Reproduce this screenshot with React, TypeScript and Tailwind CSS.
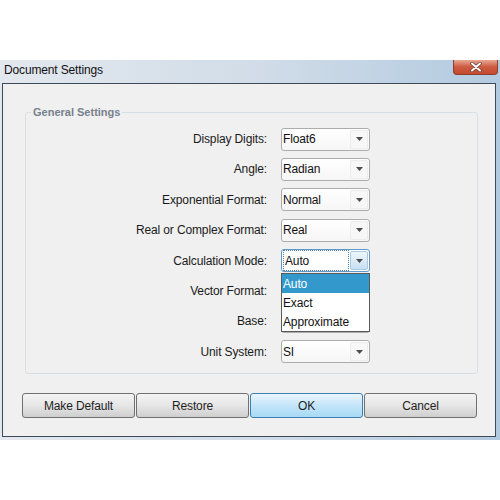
import { useState } from "react";

type Row = { label: string; value: string };

const rows: Row[] = [
  { label: "Display Digits:", value: "Float6" },
  { label: "Angle:", value: "Radian" },
  { label: "Exponential Format:", value: "Normal" },
  { label: "Real or Complex Format:", value: "Real" },
  { label: "Calculation Mode:", value: "Auto" },
  { label: "Vector Format:", value: "" },
  { label: "Base:", value: "" },
  { label: "Unit System:", value: "SI" },
];

const calcOptions = ["Auto", "Exact", "Approximate"];

function Arrow() {
  return (
    <svg width="7" height="4" viewBox="0 0 7 4">
      <path d="M0 0h7L3.5 4z" fill="#4d4d4d" />
    </svg>
  );
}

function Combo({ value, focused, open, onPick }: { value: string; focused?: boolean; open?: boolean; onPick?: (v: string) => void }) {
  return (
    <div className="relative w-[89px] h-[23px]">
      <div
        className={`w-full h-full rounded-[3px] border flex items-center ${
          focused ? "border-[#5d9ac9] bg-white" : "border-[#acacac] bg-gradient-to-b from-[#ffffff] to-[#f6f6f6]"
        }`}
      >
        <div className={`flex-1 h-full flex items-center pl-[1px] ${focused ? "m-[1px] border border-dotted border-[#5580a8]" : ""}`}>
          <span className="text-[12px] text-[#111] tracking-[-0.13px]">{value}</span>
        </div>
        <div
          className={`w-[18px] h-[19px] mr-[1px] rounded-[2px] border flex items-center justify-center ${
            focused ? "border-[#a9c8e2] bg-gradient-to-b from-[#eef6fc] to-[#c7dff2]" : "border-[#ececec] bg-[#f7f7f7]"
          }`}
        >
          <Arrow />
        </div>
      </div>
      {open && (
        <div className="absolute left-0 top-[24px] w-[89px] border border-[#5a5a5a] bg-white z-10">
          {calcOptions.map(o => (
            <div
              key={o}
              onClick={() => onPick && onPick(o)}
              className={`h-[19px] pl-[1px] flex items-center text-[12px] tracking-[-0.13px] ${o === value ? "bg-[#3399cc] text-white" : "text-[#111]"}`}
            >
              {o}
            </div>
          ))}
        </div>
      )}
    </div>
  );
}

function WinButton({ label, primary }: { label: string; primary?: boolean }) {
  return (
    <button
      className={`w-[113px] h-[25px] rounded-[3px] border text-[12px] tracking-[-0.13px] text-[#1e1e1e] ${
        primary
          ? "border-[#3c7fb1] bg-gradient-to-b from-[#eaf6fd] via-[#c4e5f9] to-[#a7d9f5]"
          : "border-[#707070] bg-gradient-to-b from-[#f4f4f4] via-[#e6e6e6] to-[#cfcfcf]"
      }`}
    >
      {label}
    </button>
  );
}

export default function App() {
  const [calc, setCalc] = useState("Auto");

  return (
    <div className="w-[500px] h-[500px] bg-white flex flex-col" style={{ fontFamily: '"Liberation Sans", Arial, sans-serif' }}>
      <div className="h-[60px]" />

      {/* glass window frame */}
      <div className="h-[380px] flex flex-col bg-gradient-to-r from-[#e3e8ee] via-[#d2dde8] to-[#b2cae0]">
        <div className="h-[23px] flex justify-between pl-[4px] pr-[2px]">
          <span className="text-[12px] text-[#111] leading-none pt-[4px] tracking-[-0.15px]">Document Settings</span>
          <div className="w-[45px] h-[15px] rounded-b-[4px] border border-t-0 border-[#8d3f2e] bg-gradient-to-b from-[#e9a894] via-[#cc5a40] to-[#c44a30] flex items-center justify-center">
            <svg width="12" height="10" viewBox="0 0 12 10">
              <path d="M2 1.5l8 7M10 1.5l-8 7" stroke="#6b3b33" strokeWidth="3.4" strokeLinecap="round" />
              <path d="M2 1.5l8 7M10 1.5l-8 7" stroke="#ffffff" strokeWidth="2" strokeLinecap="round" />
            </svg>
          </div>
        </div>

        <div className="flex-1 flex pl-[2px] pr-[4px] pb-[3px]">
          <div className="flex-1 border border-[#3e4a57] bg-[#f0f0f0] pl-[19px] pr-[17px] pt-[22px] flex flex-col">
            <fieldset className="ml-[3px] border border-[#d5dfe5] rounded-[3px] px-0 pb-[10px]">
              <legend className="ml-[5px] px-[2px] text-[11px] font-bold text-[#76818f] leading-[13px]">General Settings</legend>
              <div className="flex flex-col gap-[7.4px] mt-[8.5px]">
                {rows.map(r => (
                  <div key={r.label} className="flex items-center">
                    <div className="w-[241px] text-right text-[12px] text-[#1a1a1a] tracking-[-0.13px]">{r.label}</div>
                    <div className="ml-[14px]">
                      {r.label === "Calculation Mode:" ? (
                        <Combo value={calc} focused open onPick={setCalc} />
                      ) : (
                        <Combo value={r.value} />
                      )}
                    </div>
                  </div>
                ))}
              </div>
            </fieldset>

            <div className="flex gap-[1px] mt-[19px]">
              <WinButton label="Make Default" />
              <WinButton label="Restore" />
              <WinButton label="OK" primary />
              <WinButton label="Cancel" />
            </div>
          </div>
        </div>
      </div>
    </div>
  );
}
